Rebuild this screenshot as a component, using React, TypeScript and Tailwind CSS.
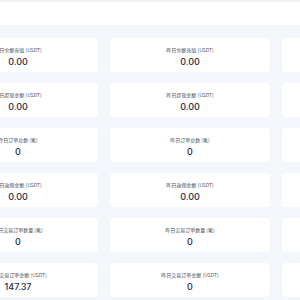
import React from "react";

const rows: { label: string; a: string; b: string }[] = [
  { label: "余额充值 (USDT)", a: "0.00", b: "0.00" },
  { label: "提现金额 (USDT)", a: "0.00", b: "0.00" },
  { label: "订单总数 (笔)", a: "0", b: "0" },
  { label: "返佣金额 (USDT)", a: "0.00", b: "0.00" },
  { label: "交易订单数量 (笔)", a: "0", b: "0" },
  { label: "交易订单金额 (USDT)", a: "147.37", b: "0" },
];

function Card({ label, value }: { label?: string; value?: string }) {
  return (
    <div className="w-[160px] h-[34px] shrink-0 bg-white rounded-[4px] flex flex-col items-center pt-[9px]">
      {label && (
        <div
          className="text-[5px] leading-[6px] text-[#4a505c] whitespace-nowrap"
          style={{ fontFamily: '"Noto Sans CJK SC", "Noto Sans", sans-serif' }}
        >
          {label}
        </div>
      )}
      {value && (
        <div
          className="mt-[4px] text-[9px] leading-[10px] font-medium text-[#1f2b4a]"
          style={{ fontFamily: 'Inter, "Noto Sans", sans-serif' }}
        >
          {value}
        </div>
      )}
    </div>
  );
}

export default function App() {
  return (
    <div className="w-[300px] h-[300px] overflow-hidden bg-[#f3f6fa] flex flex-col">
      <div className="h-[2px] shrink-0 bg-[#eef0f3]" />
      <div className="h-[23px] shrink-0 bg-white" />
      <div className="pt-[13px] flex flex-col gap-[11px] ml-[-62px]">
        {rows.map((r, i) => (
          <div key={i} className="flex gap-[12px]">
            <Card label={"今日" + r.label} value={r.a} />
            <Card label={"昨日" + r.label} value={r.b} />
            <Card />
          </div>
        ))}
      </div>
    </div>
  );
}
